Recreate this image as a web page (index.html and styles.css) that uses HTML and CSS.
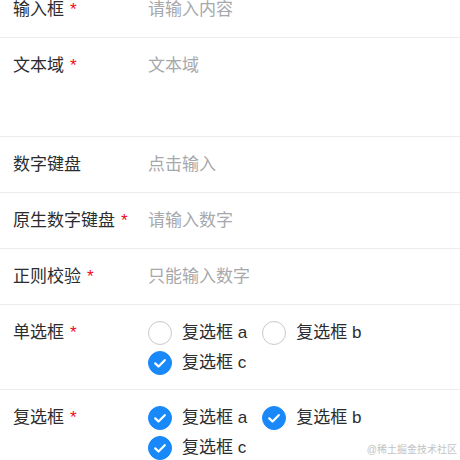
FILE: index.html
```html
<!DOCTYPE html>
<html lang="zh-CN">
<head>
    <meta charset="UTF-8">
    <meta name="viewport" content="width=device-width, initial-scale=1.0">
    <title>表单</title>
    <link rel="stylesheet" href="styles.css">
</head>
<body>
    <form class="form">
        <div class="cell">
            <div class="label required">输入框</div>
            <input class="field" type="text" placeholder="请输入内容">
        </div>

        <div class="cell">
            <div class="label required">文本域</div>
            <textarea class="field area" placeholder="文本域"></textarea>
        </div>

        <div class="cell">
            <div class="label">数字键盘</div>
            <input class="field" type="text" placeholder="点击输入" readonly>
        </div>

        <div class="cell">
            <div class="label required">原生数字键盘</div>
            <input class="field" type="number" placeholder="请输入数字">
        </div>

        <div class="cell">
            <div class="label required">正则校验</div>
            <input class="field" type="text" placeholder="只能输入数字">
        </div>

        <div class="cell multi">
            <div class="label required">单选框</div>
            <div class="group">
                <label class="check">
                    <span class="icon"></span>
                    <span>复选框 a</span>
                </label>
                <label class="check">
                    <span class="icon"></span>
                    <span>复选框 b</span>
                </label>
                <label class="check">
                    <span class="icon on">
                        <svg viewBox="0 0 24 24"><path d="M6.8 12.4l3.6 3.5 6.8-7"/></svg>
                    </span>
                    <span>复选框 c</span>
                </label>
            </div>
        </div>

        <div class="cell multi">
            <div class="label required">复选框</div>
            <div class="group">
                <label class="check">
                    <span class="icon on">
                        <svg viewBox="0 0 24 24"><path d="M6.8 12.4l3.6 3.5 6.8-7"/></svg>
                    </span>
                    <span>复选框 a</span>
                </label>
                <label class="check">
                    <span class="icon on">
                        <svg viewBox="0 0 24 24"><path d="M6.8 12.4l3.6 3.5 6.8-7"/></svg>
                    </span>
                    <span>复选框 b</span>
                </label>
                <label class="check">
                    <span class="icon on">
                        <svg viewBox="0 0 24 24"><path d="M6.8 12.4l3.6 3.5 6.8-7"/></svg>
                    </span>
                    <span>复选框 c</span>
                </label>
            </div>
        </div>
    </form>

    <div class="watermark">@稀土掘金技术社区</div>
</body>
</html>
```

FILE: styles.css
```css
* {
    box-sizing: border-box;
    margin: 0;
    padding: 0;
}

body {
    font-family: "Liberation Sans", "Noto Sans CJK SC", sans-serif;
    font-size: 17px;
    color: #2c2c2e;
    background: #fff;
    overflow: hidden;
}

/* the page is scrolled a little, first row is cut off */
.form {
    margin-top: -18px;
}

.cell {
    display: flex;
    align-items: flex-start;
    padding: 13px 16px 12px 13px;
    border-bottom: 1px solid #ebedf0;
    line-height: 30px;
}

.cell.multi {
    padding-bottom: 11px;
}

.label {
    width: 135px;
    flex-shrink: 0;
}

.required::after {
    content: "*";
    color: #ee0a24;
    margin-left: 6px;
}

.field {
    flex: 1;
    min-width: 0;
    border: none;
    outline: none;
    font: inherit;
    line-height: 30px;
    height: 30px;
    color: #2c2c2e;
    background: transparent;
}

.field::placeholder {
    color: #a7a8ab;
}

.area {
    height: 73px;
    resize: none;
}

.group {
    flex: 1;
    display: flex;
    flex-wrap: wrap;
}

.check {
    display: flex;
    align-items: center;
    height: 30px;
    margin-right: 15px;
}

.icon {
    width: 24px;
    height: 24px;
    border: 1px solid #c8c9cc;
    border-radius: 50%;
    margin-right: 10px;
    display: flex;
    align-items: center;
    justify-content: center;
}

.icon.on {
    background: #1989fa;
    border-color: #1989fa;
}

.icon svg {
    width: 24px;
    height: 24px;
    fill: none;
    stroke: #fff;
    stroke-width: 2.4;
    stroke-linecap: round;
    stroke-linejoin: round;
}

.watermark {
    position: absolute;
    right: 3px;
    bottom: 4px;
    font-size: 10px;
    color: #c3c3c3;
}
```
